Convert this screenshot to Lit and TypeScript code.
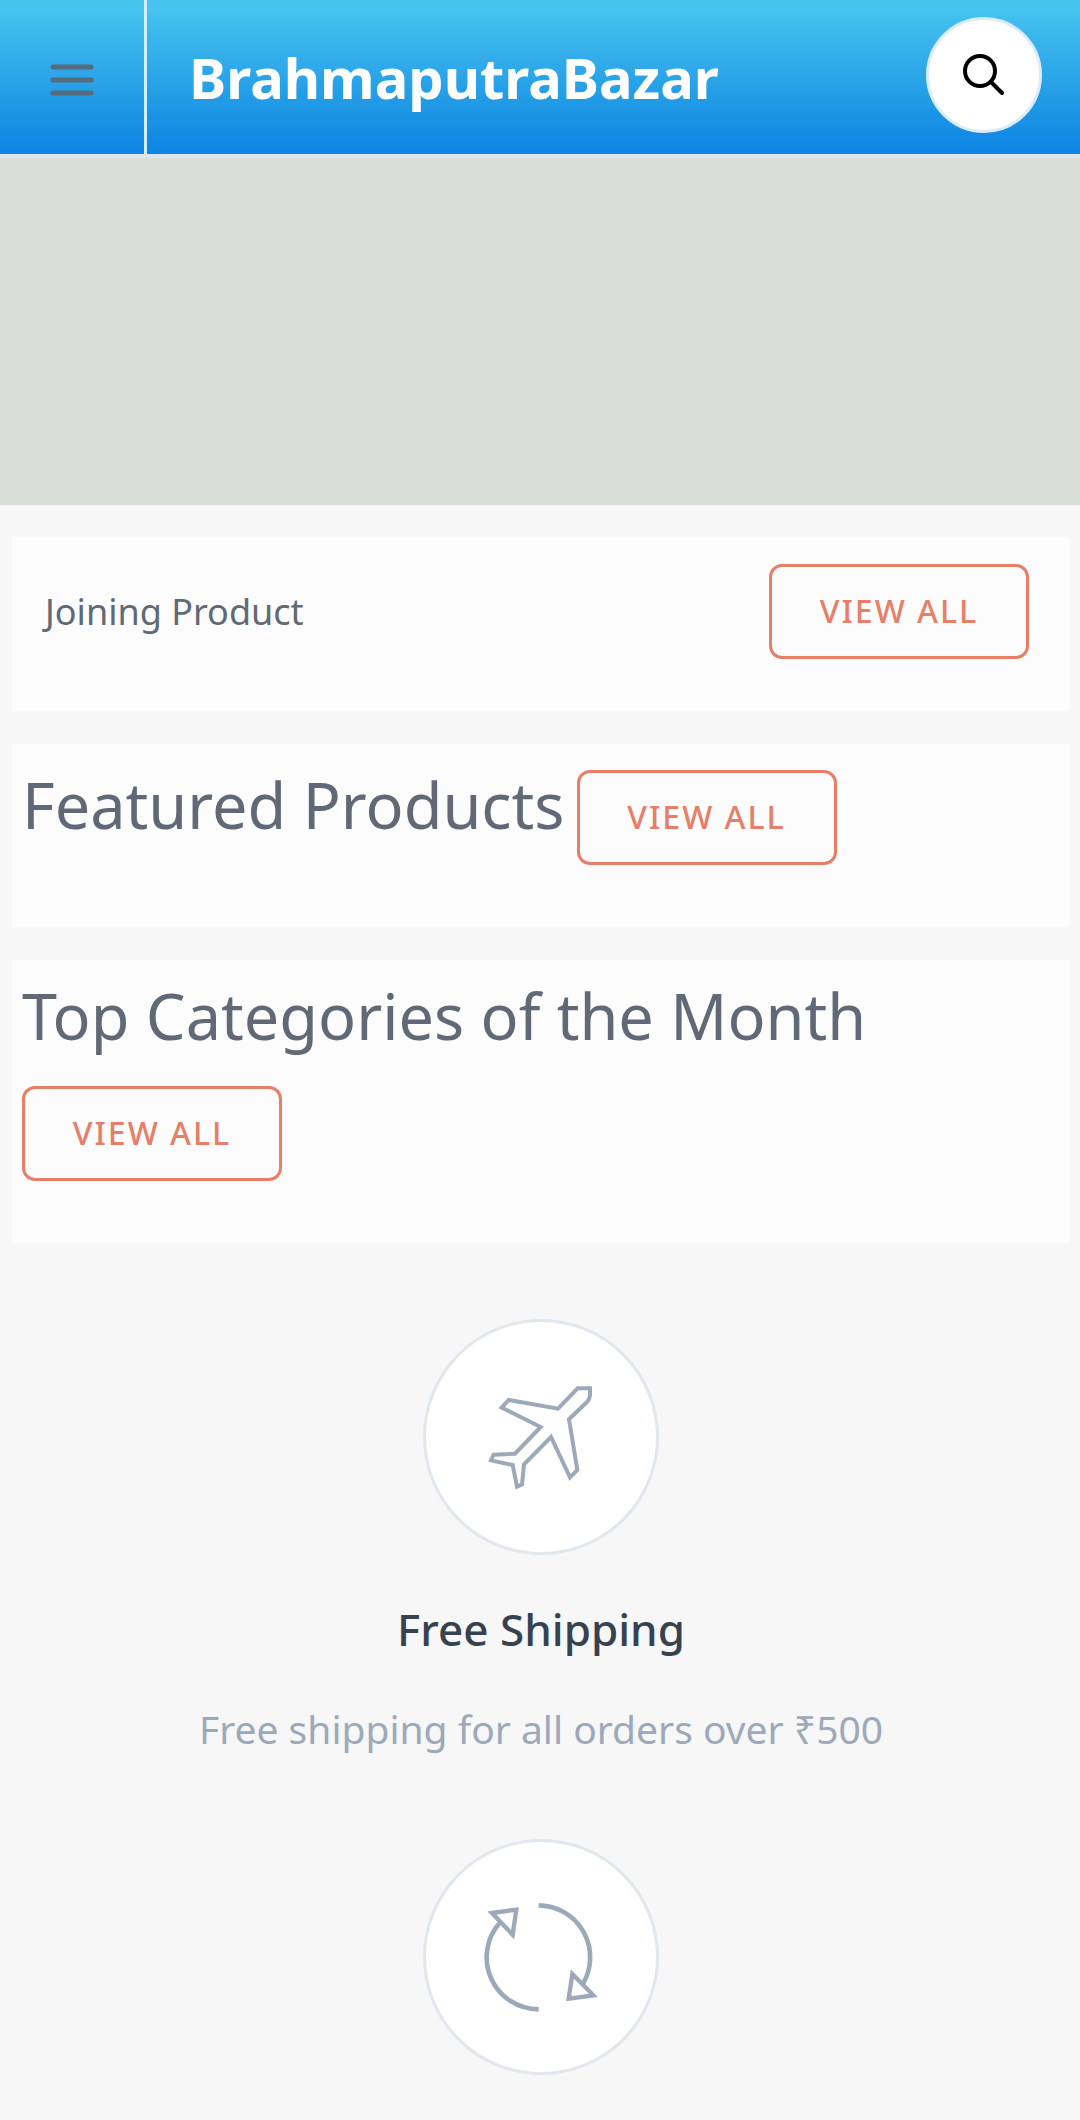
import { LitElement, html, css, svg } from "lit";
import { customElement } from "lit/decorators.js";

const plane = svg`
  <path d="M503 262H540V284Q539 295 531 303L477 355L502 507L480 529L423 408L342 490L336 550L321 557L308 492L243 478L251 461L315 458L392 378L275 320L296 297L444 323Z" stroke-width="12"></path>`;

const cycle = svg`
  <path d="M386 253A156 156 0 0 1 519 488" stroke-width="14"></path>
  <path d="M386 565A156 156 0 0 1 268 307" stroke-width="14"></path>
  <path d="M246 276L319 266L308 341Z" stroke-width="13"></path>
  <path d="M487 459L550 523L476 533Z" stroke-width="13"></path>`;

@customElement("app-root")
export class AppRoot extends LitElement {
  static styles = css`
    :host {
      display: block;
      min-height: 100vh;
      background: #f7f7f7;
      color: #606975;
      font-family: "Noto Sans", "Open Sans", sans-serif;
    }
    * {
      box-sizing: border-box;
    }
    h1, h2, h3, p {
      margin: 0;
    }
    .header {
      display: flex;
      align-items: stretch;
      height: 158px;
      border-bottom: 4px solid #dde6f0;
      background: linear-gradient(#47c4ee 4%, #0f86e3 96%);
    }
    .menu {
      width: 147px;
      padding: 5px 0 0;
      border: 0;
      border-right: 3px solid #cfeffc;
      background: none;
      color: #566b7c;
    }
    .menu svg {
      display: block;
      margin: 0 auto;
    }
    .brand {
      flex: 1;
      align-self: center;
      padding-left: 42px;
      color: #fff;
      font-size: 56px;
      font-weight: 700;
      line-height: 76px;
      text-decoration: none;
    }
    .search {
      width: 116px;
      height: 116px;
      margin: 17px 38px 0 0;
      padding: 0;
      border: 3px solid #dcebf8;
      border-radius: 50%;
      background: #fff;
      color: #000;
    }
    .search svg {
      display: block;
      margin: 0 auto;
    }
    .banner {
      height: 347px;
      background: #d9ded9;
    }
    .sections {
      display: flex;
      flex-direction: column;
      gap: 33px;
      padding: 32px 10px 0 12px;
    }
    .card {
      display: flex;
      flex-wrap: wrap;
      align-items: baseline;
      gap: 40px 12px;
      padding: 26px 10px 62px;
      background: #fcfcfc;
    }
    .card.compact {
      align-items: center;
      justify-content: space-between;
      padding: 27px 41px 52px 33px;
    }
    .title {
      font-size: 63px;
      font-weight: 400;
      line-height: 60px;
    }
    .compact .title {
      font-size: 36px;
      line-height: 48px;
    }
    .view {
      width: 260px;
      height: 95px;
      border: 3px solid #e77f68;
      border-radius: 13px;
      color: #e77f68;
      font-size: 32px;
      font-weight: 500;
      letter-spacing: 2px;
      line-height: 88px;
      text-align: center;
      text-decoration: none;
    }
    .services {
      display: flex;
      flex-direction: column;
      gap: 84px;
      padding: 76px 24px 46px 26px;
    }
    .service {
      display: flex;
      flex-direction: column;
      align-items: center;
      gap: 48px;
      text-align: center;
    }
    .disc {
      width: 236px;
      height: 236px;
      border: 3px solid #e1e7ec;
      border-radius: 50%;
      background: #fff;
      color: #9da9b9;
    }
    .disc svg {
      display: block;
      width: 100%;
      height: 100%;
    }
    .name {
      color: #374250;
      font-size: 44px;
      font-weight: 500;
      line-height: 52px;
    }
    .text {
      color: #9da9b9;
      font-size: 39px;
      line-height: 52px;
    }
  `;

  private disc(shape: unknown) {
    return html`<div class="disc">
      <svg viewBox="48 63 690 690" fill="none" stroke="currentColor" aria-hidden="true">${shape}</svg>
    </div>`;
  }

  render() {
    return html`
      <header class="header">
        <button class="menu" type="button" aria-label="Menu">
          <svg width="44" height="32" viewBox="0 0 44 32" fill="none" stroke="currentColor" stroke-width="5" stroke-linecap="round">
            <path d="M3 3H41M3 16H41M3 29H41"></path>
          </svg>
        </button>
        <a class="brand" href="#">BrahmaputraBazar</a>
        <button class="search" type="button" aria-label="Search">
          <svg width="42" height="42" viewBox="0 0 42 42" fill="none" stroke="currentColor" stroke-width="4" stroke-linecap="round">
            <circle cx="17" cy="17" r="15"></circle>
            <path d="M28 28L39 39"></path>
          </svg>
        </button>
      </header>
      <div class="banner"></div>
      <main>
        <div class="sections">
          <section class="card compact">
            <h2 class="title">Joining Product</h2>
            <a class="view" href="#joining">VIEW ALL</a>
          </section>
          <section class="card">
            <h2 class="title">Featured Products</h2>
            <a class="view" href="#featured">VIEW ALL</a>
          </section>
          <section class="card">
            <h2 class="title">Top Categories of the Month</h2>
            <a class="view" href="#categories">VIEW ALL</a>
          </section>
        </div>
        <section class="services">
          <div class="service">
            ${this.disc(plane)}
            <h3 class="name">Free Shipping</h3>
            <p class="text">Free shipping for all orders over ₹500</p>
          </div>
          <div class="service">${this.disc(cycle)}</div>
        </section>
      </main>
    `;
  }
}
